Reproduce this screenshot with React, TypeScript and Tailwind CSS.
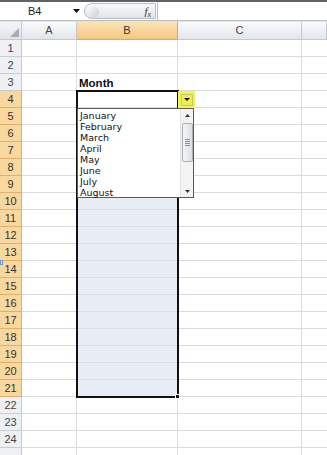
const rows = Array.from({ length: 25 }, (_, i) => i + 1);
const months = ["January", "February", "March", "April", "May", "June", "July", "August"];

function ColHeader({ label, w, active }: { label: string; w: string; active?: boolean }) {
  return (
    <div
      className={`${w} h-full shrink-0 flex items-center justify-center border-r border-b text-[11px] ${
        active
          ? "bg-gradient-to-b from-[#fbe3b6] to-[#f5c77f] border-[#e2a95e] text-[#333]"
          : "bg-gradient-to-b from-[#f9fafb] to-[#e3e6ea] border-[#c5c9cf] text-[#444]"
      }`}
    >
      {label}
    </div>
  );
}

export default function App() {
  return (
    <div
      className="relative w-[327px] h-[455px] overflow-hidden bg-white select-none"
      style={{ fontFamily: '"Liberation Sans", Arial, sans-serif' }}
    >
      {/* formula bar */}
      <div className="h-[21px] flex border-t-[2px] border-[#5f6368] border-b border-b-[#b9bec6] bg-white">
        <div className="w-[84px] flex items-center justify-between pl-[28px] pr-[4px] text-[11px] text-[#222]">
          <span>B4</span>
          <svg width="7" height="4" viewBox="0 0 7 4">
            <path d="M0 0h7L3.5 4z" fill="#111" />
          </svg>
        </div>
        <div className="w-[72px] my-[1px] flex items-center justify-end pr-[4px] rounded-l-full border border-[#b8bdc4] bg-gradient-to-b from-[#f7f8f9] to-[#e2e5e9] relative">
          <div className="absolute left-[2px] top-[2px] w-[12px] h-[12px] rounded-full bg-gradient-to-br from-[#ffffff] to-[#c8ccd2]" />
          <span
            className="text-[11px] italic text-[#333]"
            style={{ fontFamily: '"Liberation Serif", "Times New Roman", serif' }}
          >
            f<sub className="text-[8px]">x</sub>
          </span>
        </div>
        <div className="flex-1 ml-[1px] border-l border-[#b9bec6] bg-white" />
      </div>
      <div className="h-[1px] bg-[#dfe3e8]" />

      {/* column headers */}
      <div className="h-[18px] flex">
        <div className="w-[22px] h-full shrink-0 relative border-r border-b border-[#c5c9cf] bg-gradient-to-b from-[#f4f5f7] to-[#e1e4e8]">
          <svg className="absolute right-[2px] bottom-[2px]" width="9" height="9" viewBox="0 0 9 9">
            <path d="M9 0v9H0z" fill="#a9adb3" />
          </svg>
        </div>
        <ColHeader label="A" w="w-[55px]" />
        <ColHeader label="B" w="w-[101px]" active />
        <ColHeader label="C" w="w-[124px]" />
        <ColHeader label="" w="flex-1" />
      </div>

      {/* grid rows */}
      {rows.map((r) => {
        const hl = r >= 4 && r <= 21;
        const inRange = r >= 5 && r <= 21;
        return (
          <div key={r} className="h-[17px] flex">
            <div
              className={`w-[22px] h-full shrink-0 flex items-center justify-center text-[11px] border-r border-b ${
                hl
                  ? "bg-[#f9d89f] border-[#e3ae68] text-[#333]"
                  : "bg-[#eef0f3] border-[#c9cdd3] text-[#444]"
              }`}
            >
              {r < 25 ? r : ""}
            </div>
            <div className="w-[55px] h-full shrink-0 border-r border-b border-[#dadcdf]" />
            <div
              className={`w-[101px] h-full shrink-0 border-r border-b border-[#dadcdf] flex items-end ${
                inRange ? "bg-[#e8ecf5]" : ""
              }`}
            >
              {r === 3 && (
                <span className="pl-[2px] pb-[1px] text-[11.5px] font-bold text-[#111] leading-none">Month</span>
              )}
            </div>
            <div className="w-[124px] h-full shrink-0 border-r border-b border-[#dadcdf]" />
            <div className="flex-1 h-full border-b border-[#dadcdf]" />
          </div>
        );
      })}

      {/* selection border B4:B21 */}
      <div className="absolute left-[76px] top-[90px] w-[103px] h-[308px] border-[2px] border-[#111] pointer-events-none" />
      <div className="absolute left-[175px] top-[394px] w-[5px] h-[5px] bg-[#111] border border-white" />

      {/* small marker at left edge */}
      <div className="absolute left-0 top-[260px] w-[3px] h-[5px] bg-[#cfe0f5] border border-[#6c9bd2]" />

      {/* dropdown button */}
      <div className="absolute left-[178px] top-[91px] w-[17px] h-[17px] bg-[#f2f25a] flex items-center justify-center">
        <div className="w-[12px] h-[12px] border border-[#c9c95a] bg-[#eded58] flex items-center justify-center">
          <svg width="6" height="3" viewBox="0 0 6 3">
            <path d="M0 0h6L3 3z" fill="#111" />
          </svg>
        </div>
      </div>

      {/* dropdown list */}
      <div className="absolute left-[77px] top-[108px] w-[117px] h-[90px] bg-white border border-[#5b5b5b] flex">
        <div className="flex-1 pt-[1px] pl-[2px]">
          {months.map((m) => (
            <div
              key={m}
              className="h-[11px] text-[10px] leading-[11px] text-[#111]"
              style={{ fontFamily: '"DejaVu Sans", Tahoma, sans-serif', fontSize: "9.5px" }}
            >
              {m}
            </div>
          ))}
        </div>
        <div className="w-[13px] h-full bg-[#f3f3f3] border-l border-[#e2e2e2] flex flex-col items-center">
          <div className="h-[12px] flex items-center justify-center">
            <svg width="5" height="3" viewBox="0 0 5 3">
              <path d="M0 3h5L2.5 0z" fill="#333" />
            </svg>
          </div>
          <div className="w-[11px] h-[39px] mt-[2px] rounded-[2px] border border-[#a9aeb4] bg-gradient-to-r from-[#f4f5f6] to-[#dcdfe2] flex flex-col items-center justify-center gap-[1px]">
            <div className="w-[5px] h-[1px] bg-[#8a8f96]" />
            <div className="w-[5px] h-[1px] bg-[#8a8f96]" />
            <div className="w-[5px] h-[1px] bg-[#8a8f96]" />
            <div className="w-[5px] h-[1px] bg-[#8a8f96]" />
          </div>
          <div className="flex-1" />
          <div className="h-[12px] flex items-center justify-center">
            <svg width="5" height="3" viewBox="0 0 5 3">
              <path d="M0 0h5L2.5 3z" fill="#333" />
            </svg>
          </div>
        </div>
      </div>
    </div>
  );
}
